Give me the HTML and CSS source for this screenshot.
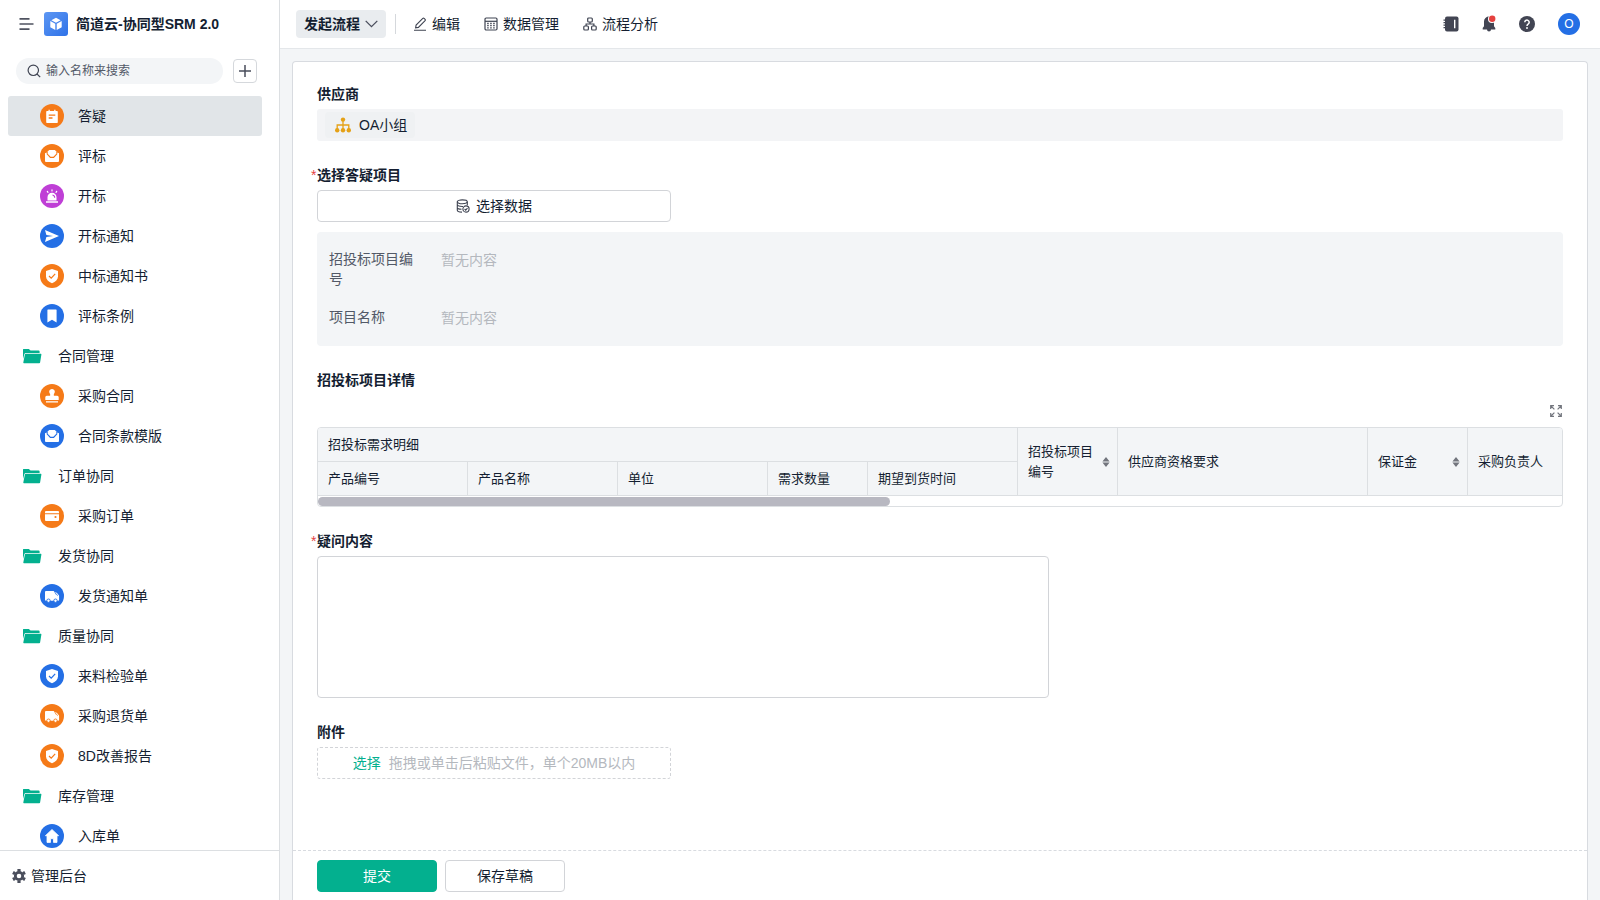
FILE: index.html
```html
<!DOCTYPE html>
<html lang="zh-CN">
<head>
<meta charset="utf-8">
<title>简道云-协同型SRM 2.0</title>
<link rel="stylesheet" href="styles.css">
</head>
<body>
<svg class="sprite" aria-hidden="true">
  <symbol id="note" viewBox="0 0 24 24"><path fill="#fff" d="M7 7h1.500V5.800h1.300V7h4.400V5.800h1.300V7H17a.8.8 0 0 1 .8.8v10.400a.8.8 0 0 1-.8.8H7a.8.8 0 0 1-.8-.8V7.800A.8.8 0 0 1 7 7z"/><path stroke="currentColor" stroke-width="1.300" d="M8.700 11.200h6.600M8.700 14h3.800"/></symbol>
  <symbol id="mail" viewBox="0 0 24 24"><path fill="#fff" d="M5 9.300l1.700-.9v1.800l3.400 3.700h3.800l3.400-3.700V8.400l1.700.9V17a1 1 0 0 1-1 1H6a1 1 0 0 1-1-1z"/><path fill="#fff" d="M9.200 6h5.600l1.500 1.400v2.300l-2.900 3h-2.800l-2.900-3V7.400z"/></symbol>
  <symbol id="alarm" viewBox="0 0 24 24"><path fill="#fff" d="M7.500 16.500v-3.300a4.500 4.500 0 0 1 9 0v3.300zM6 17.200h12v1.600H6z"/><path stroke="#fff" stroke-width="1.200" stroke-linecap="round" d="M12 5.800v1.200M7.300 7.300l.7 1M16.700 7.300l-.7 1"/><path fill="none" stroke="currentColor" stroke-width="1.100" d="M12.500 11q2.200.4 2.200 2.800"/></symbol>
  <symbol id="send" viewBox="0 0 24 24"><path fill="#fff" d="M5 6l14 6-14 6 1.400-4.900 6.600-1.100-6.600-1.100z"/></symbol>
  <symbol id="shield" viewBox="0 0 24 24"><path fill="#fff" d="M12 5l6 2v5.300c0 3.200-2.500 5.500-6 6.900-3.500-1.400-6-3.700-6-6.900V7z"/><path fill="none" stroke="currentColor" stroke-width="1.200" d="M9 12l2.200 2.200 4-4.400"/></symbol>
  <symbol id="bookmark" viewBox="0 0 24 24"><path fill="#fff" d="M8 5.500h8a.6.6 0 0 1 .6.600V18.500L12 15.800 7.400 18.500V6.100a.6.6 0 0 1 .6-.6z"/></symbol>
  <symbol id="stamp" viewBox="0 0 24 24"><path fill="#fff" d="M12 5a2.800 2.800 0 0 1 2.200 4.600c-.5.7-.5 1.300-.3 2.100h3.300a1.500 1.500 0 0 1 1.500 1.500V16H5.300v-2.800a1.500 1.500 0 0 1 1.500-1.500h3.300c.2-.8.2-1.400-.3-2.100A2.800 2.800 0 0 1 12 5zM6 17.200h12v1.400H6z"/></symbol>
  <symbol id="wallet" viewBox="0 0 24 24"><path fill="#fff" d="M6 7h12a1 1 0 0 1 1 1v1.200H5V8a1 1 0 0 1 1-1zM5 10.300h14V16a1 1 0 0 1-1 1H6a1 1 0 0 1-1-1z"/><circle cx="15.500" cy="13" r="1.100" fill="currentColor"/></symbol>
  <symbol id="truck" viewBox="0 0 24 24"><path fill="#fff" d="M6 7h7.300a1 1 0 0 1 1 1v.5h1.900a1 1 0 0 1 .8.400l1.900 2.400a1 1 0 0 1 .2.600v3.900a1 1 0 0 1-1 1H6a1 1 0 0 1-1-1V8a1 1 0 0 1 1-1z"/><path fill="none" stroke="currentColor" stroke-width=".8" d="M15 9.700h1.100l1.500 2"/><g fill="#fff" stroke="currentColor" stroke-width=".9"><circle cx="8.500" cy="16.700" r="1.700"/><circle cx="15.500" cy="16.700" r="1.700"/></g></symbol>
  <symbol id="home" viewBox="0 0 24 24"><path fill="#fff" stroke="#fff" stroke-width=".8" stroke-linejoin="round" d="M12 5.500l6.600 6.200H17v6.700h-3.500v-3.700h-3v3.700H7v-6.700H5.400z"/></symbol>
  <symbol id="folder" viewBox="0 0 20 16"><path fill="#03b08f" d="M1.500 1h5.300l1.800 1.600h8a1 1 0 0 1 1 1V5H3.800a1.500 1.500 0 0 0-1.400 1L1 11V1.500A.5.500 0 0 1 1.500 1z"/><path fill="#03b08f" d="M3.800 5.800h15a.6.6 0 0 1 .6.700l-1.300 8a.9.9 0 0 1-.9.700H2a.7.7 0 0 1-.7-.8l1.600-8a.9.9 0 0 1 .9-.6z"/></symbol>
</svg>
<div class="app">
  <aside class="sidebar">
    <header class="brand">
      <button class="icon-btn" type="button" aria-label="收起菜单"><svg width="15" height="14" viewBox="0 0 15 14" fill="none" stroke="#4f5360" stroke-width="1.700"><path d="M0.500 1.900h10M0.500 7h14M0.500 12.100h10"/></svg></button>
      <svg class="logo" width="24" height="24" viewBox="0 0 24 24"><defs><linearGradient id="lg" x1="0" y1="0" x2="1" y2="1"><stop offset="0" stop-color="#5d97f3"/><stop offset="1" stop-color="#2f72e8"/></linearGradient></defs><rect width="24" height="24" rx="3" fill="url(#lg)"/><path fill="#fff" d="M12 5.800l4.600 2.500-4.600 2.500-4.600-2.500zM6.300 9l5 2.800V18l-5-2.800zM17.700 9v6.200l-5 2.800v-6.200z"/></svg>
      <h1 class="brand-name">简道云-协同型SRM 2.0</h1>
    </header>
    <div class="search-row">
      <label class="search"><svg width="14" height="14" viewBox="0 0 14 14" fill="none" stroke="#3f4452" stroke-width="1.200"><circle cx="6.300" cy="6.300" r="5.200"/><path d="M10 10l3.200 3.200"/></svg><input type="text" placeholder="输入名称来搜索" aria-label="搜索"></label>
      <button class="add" type="button" aria-label="新建"><svg width="12" height="12" viewBox="0 0 12 12" stroke="#4a4e5c" stroke-width="1.500"><path d="M6 0v12M0 6h12"/></svg></button>
    </div>
    <nav class="menu">
      <a href="#" class="item active"><svg class="dot orange"><use href="#note"/></svg>答疑</a>
      <a href="#" class="item"><svg class="dot orange"><use href="#mail"/></svg>评标</a>
      <a href="#" class="item"><svg class="dot purple"><use href="#alarm"/></svg>开标</a>
      <a href="#" class="item"><svg class="dot blue"><use href="#send"/></svg>开标通知</a>
      <a href="#" class="item"><svg class="dot orange"><use href="#shield"/></svg>中标通知书</a>
      <a href="#" class="item"><svg class="dot blue"><use href="#bookmark"/></svg>评标条例</a>
      <a href="#" class="item group"><svg class="folder"><use href="#folder"/></svg>合同管理</a>
      <a href="#" class="item"><svg class="dot orange"><use href="#stamp"/></svg>采购合同</a>
      <a href="#" class="item"><svg class="dot blue"><use href="#mail"/></svg>合同条款模版</a>
      <a href="#" class="item group"><svg class="folder"><use href="#folder"/></svg>订单协同</a>
      <a href="#" class="item"><svg class="dot orange"><use href="#wallet"/></svg>采购订单</a>
      <a href="#" class="item group"><svg class="folder"><use href="#folder"/></svg>发货协同</a>
      <a href="#" class="item"><svg class="dot blue"><use href="#truck"/></svg>发货通知单</a>
      <a href="#" class="item group"><svg class="folder"><use href="#folder"/></svg>质量协同</a>
      <a href="#" class="item"><svg class="dot blue"><use href="#shield"/></svg>来料检验单</a>
      <a href="#" class="item"><svg class="dot orange"><use href="#truck"/></svg>采购退货单</a>
      <a href="#" class="item"><svg class="dot orange"><use href="#shield"/></svg>8D改善报告</a>
      <a href="#" class="item group"><svg class="folder"><use href="#folder"/></svg>库存管理</a>
      <a href="#" class="item"><svg class="dot blue"><use href="#home"/></svg>入库单</a>
    </nav>
    <a href="#" class="admin"><svg width="14" height="14" viewBox="0 0 14 14"><circle cx="7" cy="7" r="3.700" fill="none" stroke="#4a4e5c" stroke-width="2.800"/><path stroke="#4a4e5c" stroke-width="3.200" d="M7 0v2.500M7 11.500V14M.94 3.500l2.100 1.200M10.900 9.300l2.160 1.200M.94 10.500l2.100-1.200M10.900 4.700l2.160-1.200"/></svg>管理后台</a>
  </aside>
  <div class="main">
    <header class="topbar">
      <button class="tab" type="button">发起流程<svg width="13" height="8" viewBox="0 0 13 8" fill="none" stroke="#4a4e5c" stroke-width="1.300"><path d="M.7.900l5.800 5.800L12.300.900"/></svg></button>
      <span class="divider"></span>
      <a href="#" class="action"><svg width="14" height="14" viewBox="0 0 14 14" fill="none" stroke="#3f4452" stroke-width="1.100"><path d="M1 13.200h12M2.600 10.900l.5-2.800 6.700-6.700a.9.9 0 0 1 1.300 0l1 1a.9.9 0 0 1 0 1.300L5.400 10.400z"/></svg>编辑</a>
      <a href="#" class="action"><svg width="14" height="14" viewBox="0 0 14 14" fill="none" stroke="#3f4452" stroke-width="1.200"><rect x="1" y="1" width="12" height="12" rx="1.200"/><path d="M1 4.300h12"/><path stroke-width="1.300" stroke-dasharray="1.500 1.500" d="M3.200 6.500h8M3.200 8.700h8M3.200 10.900h8"/></svg>数据管理</a>
      <a href="#" class="action"><svg width="14" height="14" viewBox="0 0 14 14" fill="none" stroke="#3f4452" stroke-width="1.200"><rect x="4.700" y="1" width="4.600" height="4" rx=".9"/><rect x=".8" y="9" width="4.600" height="4" rx=".9"/><rect x="8.600" y="9" width="4.600" height="4" rx=".9"/><path d="M7 5v2M3.100 9V7h7.800v2"/></svg>流程分析</a>
      <div class="tools">
        <button class="icon-btn" type="button" aria-label="通讯录"><svg width="16" height="16" viewBox="0 0 16 16"><rect x="2" y=".5" width="13.500" height="15" rx="2" fill="#424553"/><path stroke="#424553" stroke-width="1.300" d="M.5 4.200h3M.5 6.700h3M.5 9.200h3M.5 11.700h3"/><path stroke="#fff" stroke-width="1.400" d="M11.700 3.800v8.400"/></svg></button>
        <button class="icon-btn" type="button" aria-label="通知"><svg width="16" height="18" viewBox="0 0 16 18"><path fill="#424553" d="M8 1.500a5 5 0 0 1 5 5v4.800l1.300 1.800v1.400H10a2 2 0 0 1-4 0H1.700v-1.400L3 11.300V6.500a5 5 0 0 1 5-5z"/><circle cx="11" cy="4" r="4" fill="#fff"/><circle cx="11.200" cy="3.800" r="3.200" fill="#e5413f"/></svg></button>
        <button class="icon-btn" type="button" aria-label="帮助"><svg width="16" height="16" viewBox="0 0 16 16"><circle cx="8" cy="8" r="8" fill="#424553"/><path fill="none" stroke="#fff" stroke-width="1.500" d="M5.800 6.300a2.200 2.100 0 1 1 3.500 1.600C8.400 8.500 8 8.800 8 10"/><circle cx="8" cy="12" r=".95" fill="#fff"/></svg></button>
        <button class="avatar" type="button">O</button>
      </div>
    </header>
    <main class="card">
      <form class="form" id="qa-form">
        <section class="field">
          <h2 class="label">供应商</h2>
          <div class="readonly"><span class="chip"><svg width="16" height="16" viewBox="0 0 16 16"><g fill="#e5a117"><circle cx="8" cy="2.600" r="2.200"/><circle cx="2.200" cy="13.200" r="2.200"/><circle cx="8" cy="13.200" r="2.200"/><circle cx="13.800" cy="13.200" r="2.200"/></g><path fill="none" stroke="#e5a117" stroke-width="1.300" d="M8 3v10M2.200 12V8h11.600v4"/></svg>OA小组</span></div>
        </section>
        <section class="field">
          <h2 class="label required">选择答疑项目</h2>
          <button class="btn pick" type="button"><svg width="14" height="14" viewBox="0 0 14 14" fill="none" stroke="#3f4452" stroke-width="1.100"><ellipse cx="6.300" cy="2.800" rx="5" ry="1.900"/><path d="M1.300 2.800v8.400c0 1 2 1.800 4.700 1.900M11.300 2.800v3.400M1.300 5.600c0 1.100 2.300 1.900 5 1.900h.7M1.300 8.500c0 .9 1.800 1.700 4.200 1.800"/><circle cx="10" cy="10" r="3.100"/><path d="M8.600 10l1.100 1.100 1.800-2"/></svg>选择数据</button>
          <dl class="summary">
            <dt>招投标项目编号</dt><dd>暂无内容</dd>
            <dt>项目名称</dt><dd>暂无内容</dd>
          </dl>
        </section>
        <section class="field">
          <h2 class="label">招投标项目详情</h2>
          <div class="table-tools"><button class="icon-btn" type="button" aria-label="全屏"><svg width="12" height="12" viewBox="0 0 12 12" fill="none" stroke="#73767e" stroke-width="1.200"><path d="M.7 4V.7H4M8 .7h3.300V4M11.300 8v3.300H8M4 11.300H.7V8M1 1l3.400 3.400M11 1L7.600 4.400M11 11L7.600 7.600M1 11l3.400-3.400"/></svg></button></div>
          <div class="table-box">
            <div class="table-view">
              <table class="grid">
                <colgroup><col class="w150"><col class="w150"><col class="w150"><col class="w100"><col class="w150"><col class="w100"><col class="w250"><col class="w100"><col class="w150"></colgroup>
                <thead>
                  <tr><th colspan="5">招投标需求明细</th><th rowspan="2"><span class="sortable">招投标项目编号<svg width="8" height="10" viewBox="0 0 8 10" fill="#73767e"><path d="M4 0l3.600 4.400H.4zM4 10L.4 5.600h7.200z"/></svg></span></th><th rowspan="2">供应商资格要求</th><th rowspan="2"><span class="sortable">保证金<svg width="8" height="10" viewBox="0 0 8 10" fill="#73767e"><path d="M4 0l3.600 4.400H.4zM4 10L.4 5.600h7.200z"/></svg></span></th><th rowspan="2">采购负责人</th></tr>
                  <tr><th>产品编号</th><th>产品名称</th><th>单位</th><th>需求数量</th><th>期望到货时间</th></tr>
                </thead>
              </table>
            </div>
            <div class="scroll"><div class="thumb"></div></div>
          </div>
        </section>
        <section class="field">
          <label class="label required" for="question">疑问内容</label>
          <textarea class="question" id="question"></textarea>
        </section>
        <section class="field">
          <h2 class="label">附件</h2>
          <div class="upload"><button class="choose" type="button">选择</button><span>拖拽或单击后粘贴文件，单个20MB以内</span></div>
        </section>
      </form>
      <footer class="actions">
        <button class="btn primary" type="submit" form="qa-form">提交</button>
        <button class="btn" type="button">保存草稿</button>
      </footer>
    </main>
  </div>
</div>
</body>
</html>
```

FILE: styles.css
```css
* { box-sizing: border-box; }
body {
  margin: 0;
  font: 14px/20px "Liberation Sans", "Noto Sans CJK SC", sans-serif;
  color: #141e31;
}
button, input, textarea { font: inherit; color: inherit; }
button { padding: 0; border: 0; background: none; cursor: pointer; }
a { color: inherit; text-decoration: none; }
h1, h2, dl, dd { margin: 0; font-size: inherit; }
svg { display: block; flex: none; }
.sprite { position: absolute; width: 0; height: 0; }

.app { display: flex; height: 100vh; overflow: hidden; background: #fff; }

.sidebar {
  display: flex;
  flex-direction: column;
  flex: 0 0 280px;
  border-right: 1px solid #dcdfe2;
}
.brand { display: flex; align-items: center; height: 48px; padding-left: 19px; flex: none; }
.logo { margin: 0 8px 0 10px; }
.brand-name { font-weight: bold; }
.search-row { display: flex; align-items: center; gap: 10px; height: 26px; margin: 10px 22px 12px 16px; flex: none; }
.search {
  display: flex;
  align-items: center;
  gap: 5px;
  flex: 1;
  min-width: 0;
  height: 26px;
  padding: 0 11px;
  border-radius: 13px;
  background: #f3f5f7;
}
.search input { flex: 1; min-width: 0; padding: 0; border: 0; outline: 0; background: none; font-size: 12px; }
.search input::placeholder { color: #525967; }
.add {
  display: grid;
  place-items: center;
  width: 24px;
  height: 24px;
  border: 1px solid #d5d8dc;
  border-radius: 4px;
}
.menu { flex: 1; min-height: 0; overflow: hidden; padding: 0 17px 0 8px; }
.item { display: flex; align-items: center; gap: 14px; height: 40px; padding-left: 32px; border-radius: 3px; }
.item.active { background: #e1e5e8; }
.item.group { gap: 16px; padding-left: 14px; }
.dot { width: 24px; height: 24px; border-radius: 50%; }
.folder { width: 20px; height: 16px; }
.orange { background: #f57a18; color: #f57a18; }
.blue { background: #246fe5; color: #246fe5; }
.purple { background: #bf3fd6; color: #bf3fd6; }
.admin { display: flex; align-items: center; gap: 5px; height: 50px; padding-left: 12px; flex: none; border-top: 1px solid #dcdfe2; }

.main { display: flex; flex-direction: column; flex: 1; min-width: 0; background: #f3f5f7; }
.topbar {
  display: flex;
  align-items: center;
  height: 49px;
  flex: none;
  padding: 0 20px 0 16px;
  background: #fff;
  border-bottom: 1px solid #e4e7ea;
}
.tab {
  display: flex;
  align-items: center;
  gap: 5px;
  height: 28px;
  padding: 0 8px;
  border-radius: 4px;
  background: #e9ecef;
  font-weight: bold;
}
.divider { width: 1px; height: 20px; margin: 0 17px 0 9px; background: #d5d8dc; }
.action { display: flex; align-items: center; gap: 5px; margin-right: 24px; }
.tools { display: flex; align-items: center; gap: 22px; margin-left: auto; }
.avatar { width: 22px; height: 22px; margin-left: 1px; border-radius: 50%; background: #246fe5; color: #fff; font-size: 12px; line-height: 22px; }

.card {
  display: flex;
  flex-direction: column;
  flex: 1;
  min-height: 0;
  margin: 12px 12px 0;
  border: 1px solid #d8dbe0;
  border-bottom: 0;
  border-radius: 4px 4px 0 0;
  background: #fff;
}
.form { display: flex; flex-direction: column; gap: 24px; flex: 1; min-height: 0; overflow: hidden; padding: 22px 24px 0; }
.label { display: block; position: relative; margin-bottom: 5px; font-weight: bold; }
.required::before { content: "*"; position: absolute; left: -6px; color: #e5413f; font-weight: normal; }
.readonly { height: 32px; padding: 3px 8px; border-radius: 3px; background: #f3f4f6; }
.chip { display: inline-flex; align-items: center; gap: 8px; height: 26px; padding: 0 8px 0 10px; border-radius: 4px; background: #eff1f3; vertical-align: top; }

.btn {
  display: flex;
  align-items: center;
  justify-content: center;
  gap: 6px;
  width: 120px;
  height: 32px;
  border: 1px solid #d2d4d8;
  border-radius: 4px;
  background: #fff;
}
.btn.pick { width: 354px; }
.btn.primary { border-color: #03b08f; background: #03b08f; color: #fff; }
.summary {
  display: grid;
  grid-template-columns: 88px 1fr;
  gap: 18px 24px;
  margin-top: 10px;
  padding: 17px 12px;
  border-radius: 4px;
  background: #f3f5f7;
}
.summary dt { color: #525967; }
.summary dd { line-height: 22px; color: #b4b8be; }

.table-tools { display: flex; align-items: center; justify-content: flex-end; height: 32px; padding-right: 1px; }
.table-box { border: 1px solid #dcdfe2; border-radius: 4px; overflow: hidden; }
.table-view { overflow: hidden; }
.grid { width: 1300px; table-layout: fixed; border-collapse: separate; border-spacing: 0; font-size: 13px; }
.w100 { width: 100px; }
.w150 { width: 150px; }
.w250 { width: 250px; }
.grid th {
  height: 34px;
  padding: 0 10px;
  border-right: 1px solid #dcdfe2;
  border-bottom: 1px solid #dcdfe2;
  background: #f3f5f7;
  font-weight: normal;
  text-align: left;
}
.sortable { display: flex; align-items: center; justify-content: space-between; gap: 8px; margin-right: -3px; }
.scroll { height: 10px; padding: 1px 0 0; }
.thumb { width: 46%; height: 9px; border-radius: 5px; background: #b8b8c1; }

.question { display: block; width: 732px; max-width: 100%; height: 142px; padding: 6px 8px; border: 1px solid #d2d4d8; border-radius: 4px; resize: none; }
.upload {
  display: flex;
  align-items: center;
  justify-content: center;
  gap: 8px;
  width: 354px;
  height: 32px;
  border: 1px dashed #d2d4d8;
  border-radius: 3px;
  color: #b4b8be;
}
.choose { color: #03b08f; }
.actions { display: flex; gap: 8px; flex: none; padding: 9px 24px 8px; border-top: 1px dashed #d8dbe0; }
```
